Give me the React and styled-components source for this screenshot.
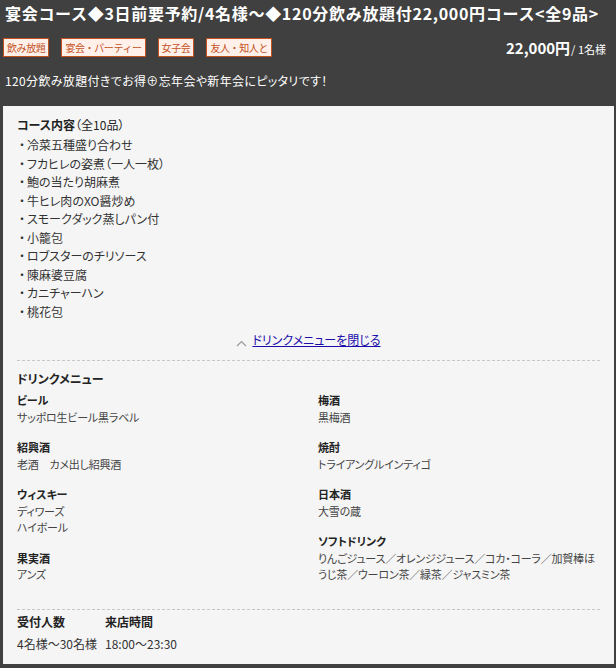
import React from 'react';
import styled, { createGlobalStyle } from 'styled-components';

const GlobalStyle = createGlobalStyle`
  html, body {
    margin: 0;
    padding: 0;
    background: #404040;
  }
  body {
    font-family: "Noto Sans CJK JP", "Noto Sans", sans-serif;
  }
`;

const Page = styled.div`
  width: 616px;
  height: 668px;
  box-sizing: border-box;
  padding: 0 2px 0 3px;
  background: #404040;
  color: #fff;
`;

const Title = styled.h1`
  margin: 0;
  padding: 1px 0 0 2px;
  font-size: 16px;
  line-height: 24px;
  font-weight: bold;
  color: #fff;
  letter-spacing: 0.7px;
  white-space: nowrap;
`;

const TagRow = styled.div`
  display: flex;
  align-items: center;
  justify-content: space-between;
  margin-top: 12px;
  padding: 0 8px 0 0;
`;

const Tags = styled.div`
  display: flex;
  gap: 12px;
`;

const Tag = styled.span`
  display: inline-block;
  height: 19px;
  line-height: 17px;
  box-sizing: border-box;
  padding: 0 3px;
  border: 1px solid #c4501c;
  background: #fff1ea;
  color: #c4501c;
  font-size: 10px;
  letter-spacing: -0.4px;
`;

const Price = styled.div`
  font-size: 15px;
  font-weight: bold;
  color: #fff;

  small {
    font-size: 11px;
    font-weight: normal;
    margin-left: 1px;
  }
`;

const Lead = styled.p`
  margin: 14px 0 0 2px;
  font-size: 12px;
  line-height: 18px;
  color: #fff;
  font-feature-settings: "palt";
  letter-spacing: 0.35px;
`;

const Panel = styled.div`
  margin-top: 16px;
  background: #f5f5f5;
  color: #333;
  padding: 10px 14px 12px 14px;
  height: 558px;
  box-sizing: border-box;
  font-feature-settings: "palt";
`;

const SectionTitle = styled.div`
  font-size: 12px;
  font-weight: bold;
  color: #222;
  line-height: 18px;

  span {
    font-weight: normal;
  }
`;

const CourseList = styled.ul`
  list-style: none;
  margin: 2px 0 0 0;
  padding: 0;
`;

const CourseItem = styled.li`
  display: flex;
  font-size: 12px;
  line-height: 18.5px;
  color: #333;

  &::before {
    content: '・';
    display: inline-block;
    width: 10px;
    text-align: center;
  }
`;

const Toggle = styled.div`
  display: flex;
  justify-content: center;
  align-items: center;
  gap: 5px;
  margin-top: 10px;
  font-size: 12px;
  line-height: 18px;

  svg {
    margin-top: 7px;
  }

  a {
    color: #1a0dab;
    text-decoration: underline;
  }
`;

const Divider = styled.hr`
  border: 0;
  border-top: 1px dashed #c8c8c8;
  margin: ${p => p.$top}px 0 0 0;
`;

const DrinkTitle = styled.div`
  margin-top: 9px;
  font-size: 12px;
  font-weight: bold;
  color: #222;
  line-height: 18px;
`;

const DrinkGrid = styled.div`
  display: grid;
  grid-template-columns: 301px 1fr;
  margin-top: 4px;
`;

const DrinkColumn = styled.div`
  display: flex;
  flex-direction: column;
`;

const DrinkGroup = styled.div`
  margin-bottom: 14px;
`;

const DrinkName = styled.div`
  font-size: 11px;
  font-weight: bold;
  line-height: 16.5px;
  color: #222;
`;

const DrinkValue = styled.div`
  font-size: 11px;
  line-height: 16.5px;
  color: #444;
  white-space: nowrap;
  letter-spacing: -0.2px;
`;

const InfoRow = styled.div`
  display: flex;
  margin-top: 3px;
`;

const InfoCol = styled.div`
  display: flex;
  flex-direction: column;
  gap: 4px;
  width: ${p => p.$width || 'auto'};
`;

const InfoLabel = styled.div`
  font-size: 12px;
  font-weight: bold;
  color: #222;
  line-height: 18px;
`;

const InfoValue = styled.div`
  font-size: 12px;
  color: #333;
  line-height: 18px;
  white-space: nowrap;
`;

const course = [
  '冷菜五種盛り合わせ',
  'フカヒレの姿煮（一人一枚）',
  '鮑の当たり胡麻煮',
  '牛ヒレ肉のXO醤炒め',
  'スモークダック蒸しパン付',
  '小籠包',
  'ロブスターのチリソース',
  '陳麻婆豆腐',
  'カニチャーハン',
  '桃花包',
];

const leftDrinks = [
  { name: 'ビール', items: ['サッポロ生ビール黒ラベル'] },
  { name: '紹興酒', items: ['老酒　カメ出し紹興酒'] },
  { name: 'ウィスキー', items: ['ディワーズ', 'ハイボール'] },
  { name: '果実酒', items: ['アンズ'] },
];

const rightDrinks = [
  { name: '梅酒', items: ['黒梅酒'] },
  { name: '焼酎', items: ['トライアングルインティゴ'] },
  { name: '日本酒', items: ['大雪の蔵'] },
  {
    name: 'ソフトドリンク',
    items: ['りんごジュース／オレンジジュース／コカ・コーラ／加賀棒ほ', 'うじ茶／ウーロン茶／緑茶／ジャスミン茶'],
  },
];

function DrinkList({ groups }) {
  return (
    <DrinkColumn>
      {groups.map(g => (
        <DrinkGroup key={g.name}>
          <DrinkName>{g.name}</DrinkName>
          {g.items.map(i => (
            <DrinkValue key={i}>{i}</DrinkValue>
          ))}
        </DrinkGroup>
      ))}
    </DrinkColumn>
  );
}

export default function App() {
  return (
    <Page>
      <GlobalStyle />
      <Title>宴会コース◆3日前要予約/4名様～◆120分飲み放題付22,000円コース&lt;全9品&gt;</Title>
      <TagRow>
        <Tags>
          <Tag>飲み放題</Tag>
          <Tag>宴会・パーティー</Tag>
          <Tag>女子会</Tag>
          <Tag>友人・知人と</Tag>
        </Tags>
        <Price>
          22,000円<small>/ 1名様</small>
        </Price>
      </TagRow>
      <Lead>120分飲み放題付きでお得⊕忘年会や新年会にピッタリです！</Lead>
      <Panel>
        <SectionTitle>
          コース内容<span>（全10品）</span>
        </SectionTitle>
        <CourseList>
          {course.map(c => (
            <CourseItem key={c}>{c}</CourseItem>
          ))}
        </CourseList>
        <Toggle>
          <svg width="11" height="7" viewBox="0 0 11 7">
            <path d="M1 6 L5.5 1.5 L10 6" fill="none" stroke="#999" strokeWidth="1.2" />
          </svg>
          <a href="#">ドリンクメニューを閉じる</a>
        </Toggle>
        <Divider $top={11} />
        <DrinkTitle>ドリンクメニュー</DrinkTitle>
        <DrinkGrid>
          <DrinkList groups={leftDrinks} />
          <DrinkList groups={rightDrinks} />
        </DrinkGrid>
        <Divider $top={12} />
        <InfoRow>
          <InfoCol $width="88px">
            <InfoLabel>受付人数</InfoLabel>
            <InfoValue>4名様～30名様</InfoValue>
          </InfoCol>
          <InfoCol>
            <InfoLabel>来店時間</InfoLabel>
            <InfoValue>18:00～23:30</InfoValue>
          </InfoCol>
        </InfoRow>
      </Panel>
    </Page>
  );
}
